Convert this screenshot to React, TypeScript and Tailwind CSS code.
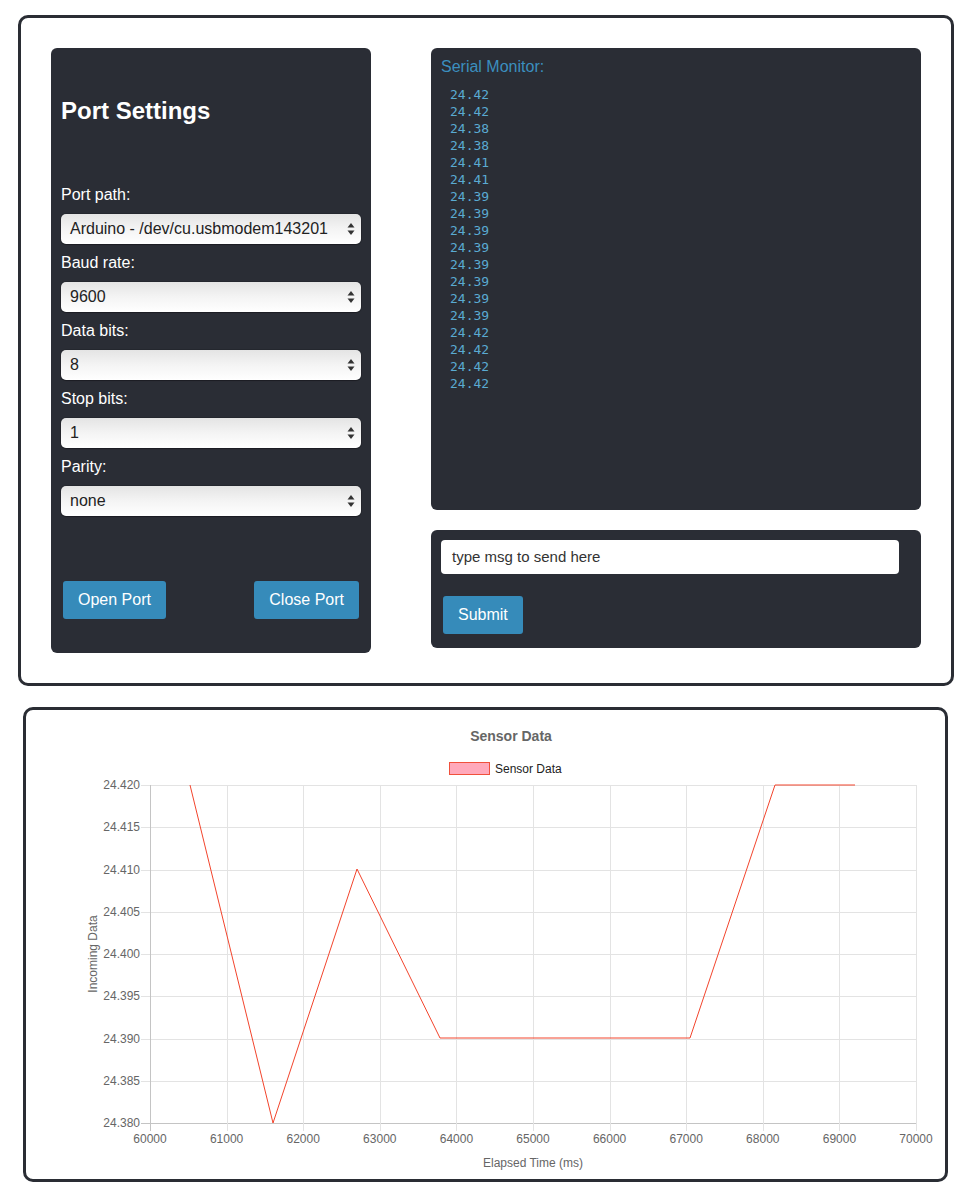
import React from "react";

const font = { fontFamily: '"Liberation Sans", Arial, sans-serif' };

function Arrows() {
  return (
    <svg width="8" height="14" viewBox="0 0 8 14" className="absolute right-[6px] top-[8px] pointer-events-none">
      <path d="M4 1 L7.5 5.5 L0.5 5.5 Z" fill="#333" />
      <path d="M4 13 L7.5 8.5 L0.5 8.5 Z" fill="#333" />
    </svg>
  );
}

function Field({ label, value }: { label: string; value: string }) {
  return (
    <div className="flex flex-col">
      <label className="h-[18px] leading-[18px] text-[16px] text-white mb-[10px]">{label}</label>
      <div className="relative h-[30px] mb-[10px] rounded-[5px] bg-gradient-to-b from-[#e4e4e4] via-[#f4f4f4] to-white shadow-[0_0_0_1px_rgba(0,0,0,0.12),0_1px_1px_rgba(0,0,0,0.25)]">
        <div className="h-full pl-[9px] leading-[30px] text-[16px] text-[#222] whitespace-nowrap overflow-hidden">{value}</div>
        <Arrows />
      </div>
    </div>
  );
}

const values = ["24.42","24.42","24.38","24.38","24.41","24.41","24.39","24.39","24.39","24.39","24.39","24.39","24.39","24.39","24.42","24.42","24.42","24.42"];

function Chart() {
  const L = 150, R = 916, T = 785, B = 1123;
  const xs = Array.from({ length: 11 }, (_, i) => L + ((R - L) * i) / 10);
  const ys = Array.from({ length: 9 }, (_, i) => T + ((B - T) * i) / 8);
  const yl = ["24.420","24.415","24.410","24.405","24.400","24.395","24.390","24.385","24.380"];
  const pts = "190,785 273,1123 357,869 440,1038 690,1038 775,785 855,785";
  return (
    <svg width="919" height="469" viewBox="26 710 919 469" style={font}>
      {ys.map((y, i) => (
        <line key={"h" + i} x1={141} x2={R} y1={Math.round(y) + 0.5} y2={Math.round(y) + 0.5} stroke={i === 8 ? "#c4c4c4" : "#e3e3e3"} strokeWidth={1} />
      ))}
      {xs.map((x, i) => (
        <line key={"v" + i} x1={Math.round(x) + 0.5} x2={Math.round(x) + 0.5} y1={T} y2={B + 8} stroke={i === 0 ? "#c4c4c4" : "#e3e3e3"} strokeWidth={1} />
      ))}
      {ys.map((y, i) => (
        <text key={"yl" + i} x={140} y={y + 4} textAnchor="end" fontSize="12" fill="#666">{yl[i]}</text>
      ))}
      {xs.map((x, i) => (
        <text key={"xl" + i} x={x} y={1143} textAnchor="middle" fontSize="12" fill="#666">{60000 + i * 1000}</text>
      ))}
      <text x={533} y={1167} textAnchor="middle" fontSize="12" fill="#666">Elapsed Time (ms)</text>
      <text x={0} y={0} transform="translate(97 954) rotate(-90)" textAnchor="middle" fontSize="12" fill="#666">Incoming Data</text>
      <text x={511} y={741} textAnchor="middle" fontSize="14" fontWeight="bold" fill="#666">Sensor Data</text>
      <rect x={449.5} y={762.5} width={40} height={12} fill="rgba(255,99,132,0.55)" stroke="#f0503c" strokeWidth={1} />
      <text x={495} y={773} fontSize="12" fill="#222">Sensor Data</text>
      <polyline points={pts} fill="none" stroke="#f2442c" strokeWidth={1} />
    </svg>
  );
}

export default function App() {
  return (
    <div className="bg-white w-[979px] min-h-[1199px] pt-[15px] pb-[17px]" style={font}>
      <div className="ml-[18px] w-[936px] border-[3px] border-[#2a2d34] rounded-[10px] p-[30px] flex gap-[60px] items-start">
        <div className="w-[320px] h-[605px] bg-[#2a2d35] rounded-[6px] px-[10px] flex flex-col">
          <h2 className="mt-[49px] h-[28px] leading-[28px] text-[24px] font-bold text-white">Port Settings</h2>
          <div className="mt-[61px]">
            <Field label="Port path:" value="Arduino - /dev/cu.usbmodem143201" />
            <Field label="Baud rate:" value="9600" />
            <Field label="Data bits:" value="8" />
            <Field label="Stop bits:" value="1" />
            <Field label="Parity:" value="none" />
          </div>
          <div className="mt-[55px] flex justify-between px-[2px]">
            <button className="h-[38px] px-[15px] rounded-[3px] bg-[#368bba] text-white text-[16px]">Open Port</button>
            <button className="h-[38px] px-[15px] rounded-[3px] bg-[#368bba] text-white text-[16px]">Close Port</button>
          </div>
        </div>
        <div className="w-[490px] flex flex-col gap-[20px]">
          <div className="h-[462px] bg-[#2a2d35] rounded-[6px] px-[10px] pt-[10px]">
            <div className="h-[18px] leading-[18px] text-[16px] text-[#3b8fbf]">Serial Monitor:</div>
            <div className="mt-[10px] pl-[9px] text-[13px] leading-[17px] text-[#5aaad2]" style={{ fontFamily: '"DejaVu Sans Mono", monospace' }}>
              {values.map((v, i) => (
                <div key={i}>{v}</div>
              ))}
            </div>
          </div>
          <div className="h-[118px] bg-[#2a2d35] rounded-[6px] px-[10px] pt-[10px]">
            <div className="w-[458px] h-[34px] bg-white rounded-[4px] pl-[11px] leading-[34px] text-[15px] text-[#333]">type msg to send here</div>
            <button className="mt-[22px] ml-[2px] h-[38px] px-[15px] rounded-[3px] bg-[#368bba] text-white text-[16px]">Submit</button>
          </div>
        </div>
      </div>
      <div className="ml-[23px] mt-[21px] w-[925px] h-[475px] border-[3px] border-[#2a2d34] rounded-[10px] overflow-hidden">
        <Chart />
      </div>
    </div>
  );
}
